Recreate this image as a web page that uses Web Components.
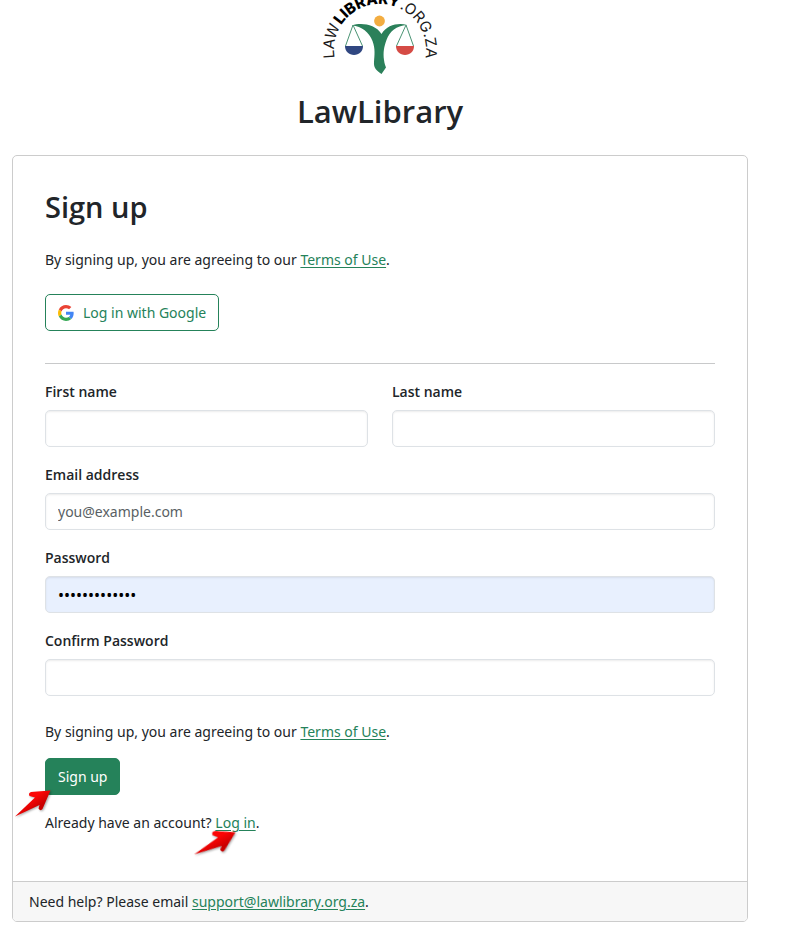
<!DOCTYPE html>
<html lang="en">
<head>
<meta charset="utf-8">
<meta name="viewport" content="width=device-width, initial-scale=1">
<title>Sign up - LawLibrary</title>
<style>
  html { --green: #25825a; --line: #cccccc; --ink: #212529; }
  body {
    margin: 0; padding: 0 51px 3px 12px; background: #fff; color: var(--ink);
    font: 14px/24px "Noto Sans", "Open Sans", sans-serif;
  }
</style>
</head>
<body>
<signup-page></signup-page>

<script>
const define = (name, html, setup) => {
  const template = document.createElement('template');
  template.innerHTML = html;
  customElements.define(name, class extends HTMLElement {
    constructor() {
      super();
      this.attachShadow({ mode: 'open' }).append(template.content.cloneNode(true));
    }
    connectedCallback() { if (setup) setup(this, this.shadowRoot); }
  });
};

define('law-logo', `
  <style>
    :host { display: block; width: 120px; height: 76px; }
    svg { display: block; width: 100%; height: 100%; }
    text { font-family: Inter, sans-serif; font-size: 15px; fill: #1b1b1b; }
    .bold { font-weight: 800; fill: #000; }
  </style>
  <svg viewBox="320 0 120 76" role="img" aria-label="LawLibrary.org.za">
    <defs><path id="ring" d="M334.700 58 A46 46 0 1 1 425.300 58"/></defs>
    <text><textPath href="#ring" startOffset="0">LAW</textPath></text>
    <text class="bold"><textPath href="#ring" startOffset="34">LIBRARY</textPath></text>
    <text><textPath href="#ring" startOffset="100">.ORG.ZA</textPath></text>
    <circle cx="379.5" cy="21" r="5.4" fill="#f3ad41"/>
    <path fill="#2b805a" d="M352 25.500C361 22.500 375 24 381.500 34C387 24.500 399 22.500 407 25C396 26 390 31 386.500 40C384 47 383 52 384 60C384.500 64 385.500 66 386 67.500L381.500 74C376.500 70.500 373.500 68 374 62C374.500 55 375.500 49 372.500 41C369 32 362 26.500 352 25.500Z"/>
    <path fill="none" stroke="#4a9474" d="M353 25L345.500 46M353 25L362.500 46M406 25L396.500 46M406 25L413.500 46"/>
    <path fill="#304781" d="M345 46H363C363 51.500 359 55 354 55S345 51.500 345 46Z"/>
    <path fill="#d54b45" d="M396 46H414C414 51.500 410 55 405 55S396 51.500 396 46Z"/>
  </svg>`);

define('google-mark', `
  <style>:host { display: block; width: 16px; height: 16px; } svg { display: block; }</style>
  <svg viewBox="0 0 48 48" width="16" height="16" aria-hidden="true">
    <path fill="#ea4335" d="M24 9.500c3.540 0 6.710 1.220 9.210 3.600l6.850-6.850C35.900 2.380 30.470 0 24 0 14.620 0 6.510 5.380 2.560 13.220l7.980 6.190C12.430 13.720 17.740 9.500 24 9.500z"/>
    <path fill="#4285f4" d="M46.980 24.550c0-1.570-.15-3.090-.38-4.550H24v9.020h12.940c-.58 2.960-2.260 5.480-4.780 7.180l7.730 6c4.510-4.180 7.090-10.360 7.090-17.650z"/>
    <path fill="#fbbc05" d="M10.530 28.590c-.48-1.450-.76-2.990-.76-4.590s.27-3.140.76-4.590l-7.980-6.190C.92 16.460 0 20.120 0 24c0 3.880.92 7.540 2.560 10.780l7.970-6.190z"/>
    <path fill="#34a853" d="M24 48c6.480 0 11.930-2.130 15.890-5.810l-7.730-6c-2.150 1.450-4.920 2.300-8.160 2.300-6.260 0-11.570-4.220-13.470-9.910l-7.980 6.190C6.510 42.620 14.620 48 24 48z"/>
  </svg>`);

define('text-link', `
  <style>:host { display: inline; } a { color: var(--green); text-decoration: underline; text-underline-offset: 2px; }</style>
  <a><slot></slot></a>`,
  (host, root) => { root.querySelector('a').href = host.getAttribute('href') || '#'; });

define('action-button', `
  <style>
    :host { display: inline-block; }
    button {
      display: flex; align-items: center; gap: 9px; height: 37px; padding: 0 12px;
      border: 1px solid var(--green); border-radius: 5px; background: #fff; color: var(--green); font: inherit; cursor: pointer;
    }
    :host([primary]) button { background: var(--green); color: #fff; }
  </style>
  <button type="button"><slot name="icon"></slot><slot></slot></button>`);

define('form-field', `
  <style>
    :host { display: block; min-width: 0; }
    label { display: block; margin-bottom: 6px; font-family: "Open Sans", sans-serif; font-weight: 600; }
    input {
      display: block; box-sizing: border-box; width: 100%; height: 37px; padding: 0 12px;
      border: 1px solid #dee2e6; border-radius: 5px; background: #fff; color: var(--ink);
      font: inherit; outline: 0; box-shadow: inset 0 1px 2px rgba(0, 0, 0, .08);
    }
    input[type="password"] { font-size: 16px; }
    input::placeholder { color: #595f64; opacity: 1; }
    :host([filled]) input { background: #e8f0fe; color: #000; }
  </style>
  <label for="control"></label><input id="control">`,
  (host, root) => {
    const input = root.querySelector('input');
    root.querySelector('label').textContent = host.getAttribute('label');
    input.type = host.getAttribute('type') || 'text';
    input.placeholder = host.getAttribute('placeholder') || '';
    input.value = host.getAttribute('value') || '';
  });

define('red-arrow', `
  <style>:host { display: block; width: 38px; height: 30px; pointer-events: none; } svg { display: block; width: 100%; height: 100%; overflow: visible; filter: drop-shadow(1px 1px 1px rgba(0, 0, 0, .35)); }</style>
  <svg viewBox="0 0 38 30" aria-hidden="true">
    <defs><linearGradient id="red" x1="0" y1="0" x2="1" y2="1"><stop offset=".4" stop-color="#fb0505"/><stop offset=".65" stop-color="#c90000"/></linearGradient></defs>
    <path fill="url(#red)" d="M36.500 1.500L17 3Q14 4 15.500 7L21 8.500L1 27.500L25.500 16L24.500 19.500Q26.500 22.500 28.500 20Z"/>
  </svg>`);

define('signup-card', `
  <style>
    :host { display: block; border: 1px solid var(--line); border-radius: 5px; background: #fff; overflow: hidden; }
    .content { padding: 32px 32px 46px; }
    footer { padding: 8px 16px; border-top: 1px solid var(--line); background: #f7f7f7; line-height: 23px; }
  </style>
  <div class="content"><slot></slot></div>
  <footer><slot name="footer"></slot></footer>`);

define('signup-page', `
  <style>
    :host { display: block; }
    header { display: flex; flex-direction: column; align-items: center; }
    h1, h2 { font-family: "Open Sans", sans-serif; font-weight: 600; }
    h1 { margin: 13px 0 22px; font-size: 31px; line-height: 44px; }
    h2 { margin: 0 0 22px; font-size: 29px; line-height: 38px; }
    p { margin: 0; }
    form { display: grid; gap: 16px; justify-items: start; }
    form > form-field, .names { width: 100%; }
    .names { display: grid; grid-template-columns: 1fr 1fr; gap: 24px; }
    .google { margin-top: 22px; display: flex; }
    hr { margin: 32px 0 16px; border: 0; border-top: 1px solid #c8c9ca; }
    .terms { margin: 8px 0 -2px; }
    .marked { position: relative; display: inline-flex; }
    red-arrow { position: absolute; }
    .marked.submit red-arrow { top: 31px; right: 68px; }
    .marked.login red-arrow { top: 17px; right: 20px; width: 42px; height: 32px; transform: rotate(8deg); }
  </style>
  <header><law-logo></law-logo><h1>LawLibrary</h1></header>
  <main>
    <signup-card>
      <h2>Sign up</h2>
      <p>By signing up, you are agreeing to our <text-link href="#terms">Terms of Use</text-link>.</p>
      <div class="google"><action-button><google-mark slot="icon"></google-mark>Log in with Google</action-button></div>
      <hr>
      <form>
        <div class="names">
          <form-field label="First name"></form-field>
          <form-field label="Last name"></form-field>
        </div>
        <form-field label="Email address" type="email" placeholder="you@example.com"></form-field>
        <form-field label="Password" type="password" value="correct-horse" filled></form-field>
        <form-field label="Confirm Password" type="password"></form-field>
        <p class="terms">By signing up, you are agreeing to our <text-link href="#terms">Terms of Use</text-link>.</p>
        <span class="marked submit"><action-button primary>Sign up</action-button><red-arrow></red-arrow></span>
        <p>Already have an account? <span class="marked login"><text-link href="#login">Log in</text-link><red-arrow></red-arrow></span>.</p>
      </form>
      <span slot="footer">Need help? Please email <text-link href="mailto:support@lawlibrary.org.za">support@lawlibrary.org.za</text-link>.</span>
    </signup-card>
  </main>`);
</script>
</body>
</html>
